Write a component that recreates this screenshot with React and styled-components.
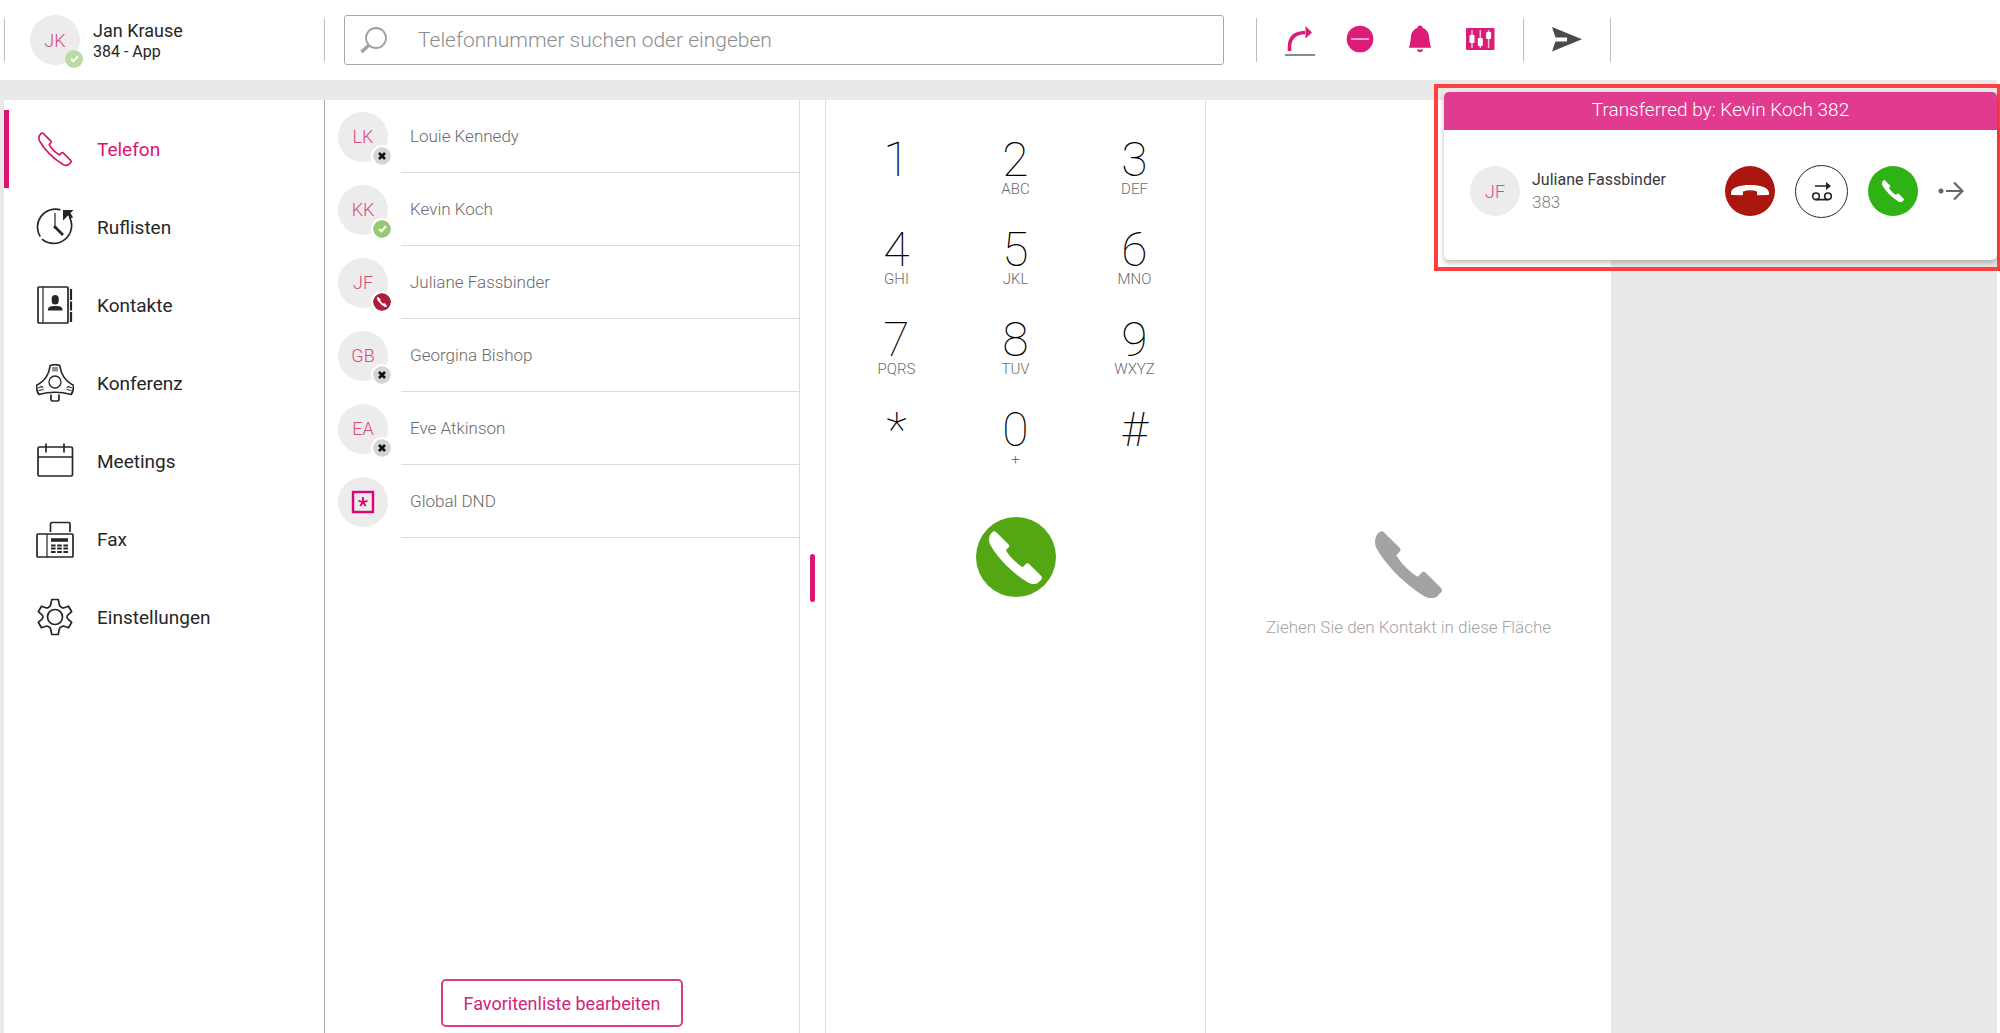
import React from 'react';
import styled, { createGlobalStyle } from 'styled-components';

const magenta = '#dc1472';

const GlobalStyle = createGlobalStyle`
  *, *::before, *::after { box-sizing: border-box; }
  html, body, #root { height: 100%; }
  body {
    margin: 0;
    background: #fff;
    color: #262626;
    font-family: Roboto, "Liberation Sans", sans-serif;
    font-size: 18px;
    overflow: hidden;
  }
  button, input { font: inherit; color: inherit; }
  button { background: none; border: 0; padding: 0; cursor: pointer; }
  svg { display: block; }
`;

const Page = styled.div`
  min-height: 100%;
  display: flex;
  flex-direction: column;
`;

const Header = styled.header`
  height: 80px;
  max-width: 1611px;
  width: 100%;
  padding-left: 4px;
  display: flex;
  align-items: center;
`;

const Profile = styled.div`
  width: 320px;
  height: 44px;
  border-left: 1px solid #bdbdbd;
  padding-left: 25px;
  display: flex;
  align-items: center;
  gap: 13px;
`;

const ProfileName = styled.div`
  padding-top: 2px;
  line-height: 21px;
  font-size: 18px;
`;

const ProfileLine = styled.div`
  line-height: 21px;
  font-size: 16px;
`;

const SearchWrap = styled.div`
  flex: 1;
  height: 44px;
  padding: 0 32px 0 19px;
  border-left: 1px solid #bdbdbd;
  display: flex;
  align-items: center;
`;

const SearchBox = styled.label`
  flex: 1;
  height: 50px;
  padding-left: 15px;
  border: 1px solid #a8a8a8;
  border-radius: 3px;
  display: flex;
  align-items: center;
  gap: 31px;
`;

const SearchInput = styled.input`
  flex: 1;
  border: 0;
  outline: 0;
  padding: 0;
  background: none;
  font-size: 21px;
  font-weight: 300;
  &::placeholder { color: #8c8c8c; opacity: 1; }
`;

const Tools = styled.div`
  width: ${(p) => p.$width}px;
  height: 44px;
  border-left: 1px solid #bdbdbd;
  display: flex;
  align-items: center;
  justify-content: center;
  gap: 30px;
`;

const ToolsEnd = styled.div`
  width: 1px;
  height: 44px;
  background: #bdbdbd;
`;

const ToolButton = styled.button`
  width: 30px;
  height: 34px;
`;

const Stage = styled.div`
  flex: 1;
  display: flex;
  margin-right: 3px;
  padding: 20px 0 0 4px;
  background: #e9e9e9;
`;

const Main = styled.main`
  flex: 1;
  max-width: 1607px;
  display: flex;
  background: #fff;
`;

const Sidebar = styled.nav`
  width: 321px;
  padding-top: 10px;
  border-right: 1px solid #a8a8a8;
`;

const NavLink = styled.a`
  height: 78px;
  padding-left: 27px;
  border-left: 5px solid ${(p) => (p.$active ? magenta : 'transparent')};
  display: flex;
  align-items: center;
  gap: 23px;
  font-size: 19px;
  color: ${(p) => (p.$active ? magenta : '#262626')};
  text-decoration: none;
`;

const Favorites = styled.section`
  width: 475px;
  padding-bottom: 6px;
  border-right: 1px solid #dcdcdc;
  display: flex;
  flex-direction: column;
  align-items: center;
  justify-content: space-between;
`;

const ContactList = styled.ul`
  width: 100%;
  margin: 0;
  padding: 0 0 0 13px;
  list-style: none;
`;

const ContactRow = styled.li`
  height: 73px;
  display: flex;
  align-items: center;
  gap: 13px;
`;

const ContactName = styled.span`
  flex: 1;
  height: 73px;
  padding-left: 9px;
  border-bottom: 1px solid #dcdcdc;
  font-weight: 300;
  font-size: 17px;
  line-height: 73px;
  color: #6b6b6b;
`;

const Avatar = styled.div`
  position: relative;
  width: 50px;
  height: 50px;
  flex: none;
  border-radius: 50%;
  background: #ececec;
  display: flex;
  align-items: center;
  justify-content: center;
  font-weight: 300;
  font-size: 18px;
  color: #d9487f;
`;

const badgeColors = { offline: '#d3d5d8', online: '#95c973', busy: '#ab1e3f', self: '#b9dca4' };

const Badge = styled.span`
  position: absolute;
  right: -5px;
  bottom: -5px;
  width: 22px;
  height: 22px;
  border: 2px solid ${(p) => (p.$kind === 'self' ? 'transparent' : '#fff')};
  border-radius: 50%;
  background: ${(p) => badgeColors[p.$kind]};
  background-clip: padding-box;
  color: #fff;
  display: flex;
  align-items: center;
  justify-content: center;
`;

const OutlineButton = styled.button`
  width: 242px;
  height: 48px;
  border: 2px solid #de3d86;
  border-radius: 5px;
  color: #d6217b;
`;

const Splitter = styled.div`
  width: 26px;
  padding-top: 22px;
  border-right: 1px solid #dcdcdc;
  display: flex;
  align-items: center;
  justify-content: center;
`;

const Grip = styled.div`
  width: 5px;
  height: 48px;
  border-radius: 3px;
  background: ${magenta};
`;

const Dialer = styled.section`
  width: 380px;
  padding: 40px 11px 0 11px;
  border-right: 1px solid #dcdcdc;
  display: flex;
  flex-direction: column;
  align-items: center;
  gap: 32px;
`;

const Keypad = styled.div`
  width: 100%;
  display: grid;
  grid-template-columns: repeat(3, 1fr);
  row-gap: 15px;
`;

const Key = styled.button`
  height: 75px;
  display: flex;
  flex-direction: column;
  align-items: center;
`;

const Digit = styled.span`
  font-size: 48px;
  line-height: 40px;
  font-weight: 100;
  color: #000;
`;

const Letters = styled.span`
  font-size: 15px;
  line-height: 18px;
  font-weight: 300;
  color: #6b6b6b;
`;

const CallButton = styled.button`
  width: 80px;
  height: 80px;
  border-radius: 50%;
  background: #52a713;
  color: #fff;
  display: flex;
  align-items: center;
  justify-content: center;
`;

const DropZone = styled.section`
  flex: 1;
  padding-top: 36px;
  display: flex;
  flex-direction: column;
  align-items: center;
  justify-content: center;
  gap: 18px;
  color: #a3a3a3;
`;

const DropText = styled.p`
  margin: 0;
  font-size: 17px;
  line-height: 22px;
  font-weight: 300;
`;

const Highlight = styled.div`
  position: absolute;
  top: 84px;
  right: 0;
  width: 566px;
  padding: 4px 0 7px 6px;
  border: 4px solid #ff4040;
  border-right-width: 3px;
`;

const Toast = styled.aside`
  border-radius: 5px;
  background: #fff;
  box-shadow: 0 3px 5px rgba(0, 0, 0, 0.25);
  overflow: hidden;
`;

const ToastTitle = styled.h2`
  margin: 0;
  height: 38px;
  background: #e13b8f;
  color: #fff;
  font-size: 19px;
  font-weight: 300;
  line-height: 36px;
  text-align: center;
`;

const ToastBody = styled.div`
  height: 130px;
  padding: 0 33px 8px 26px;
  display: flex;
  align-items: center;
`;

const Caller = styled.div`
  flex: 1;
  padding-left: 12px;
  font-size: 16px;
  line-height: 22px;
  color: #3a3a3a;
`;

const CallerNumber = styled.div`
  font-size: 17px;
  font-weight: 300;
  color: #808080;
`;

const Actions = styled.div`
  display: flex;
  align-items: center;
  gap: 20px;
`;

const RoundButton = styled.button`
  width: ${(p) => (p.$outlined ? 53 : 50)}px;
  height: ${(p) => (p.$outlined ? 53 : 50)}px;
  border-radius: 50%;
  border: ${(p) => (p.$outlined ? '1px solid #262626' : '0')};
  background: ${(p) => p.$color};
  color: #fff;
  display: flex;
  align-items: center;
  justify-content: center;
`;

const handset =
  'M3.2 2.2 C4.8 .4 7 -.5 8.6 1 L24.4 16.6 C26 18.2 25.8 19.6 24.6 20.8 L21.4 24.2 C25 31 33.5 40 42.6 45.8 L46.6 41.8 C48 40.4 49.4 40.4 50.8 41.8 L66 57 C67.4 58.4 67.2 60.2 66 61.6 L62 65.4 C59 68 54 67.6 50 65.4 C30 54 10 33 1.4 17 C-.8 12.4 -.4 5.8 3.2 2.2 Z';

const Handset = ({ size }) => (
  <svg width={size} height={size} viewBox="0 0 67 67" fill="currentColor"><path d={handset} /></svg>
);

const BadgeIcon = ({ kind }) => {
  if (kind === 'offline')
    return <svg width="8" height="8" viewBox="0 0 8 8" stroke="#111" strokeWidth="2.6"><path d="M1 1l6 6M7 1l-6 6" /></svg>;
  if (kind === 'busy') return <Handset size={10} />;
  return <svg width="9" height="8" viewBox="0 0 9 8" fill="none" stroke="#fff" strokeWidth="2.2"><path d="M1 4l2.4 2.2L8 1.2" /></svg>;
};

const Person = ({ initials, kind, children }) => (
  <Avatar>
    {initials}
    {children}
    {kind && <Badge $kind={kind}><BadgeIcon kind={kind} /></Badge>}
  </Avatar>
);

const NavSvg = ({ children }) => (
  <svg width="38" height="38" viewBox="0 0 38 38" fill="none" stroke="currentColor" strokeWidth="1.7" strokeLinejoin="round">
    {children}
  </svg>
);

const icons = {
  phone: <NavSvg><path transform="translate(3 3) scale(.48)" strokeWidth="3.6" d={handset} /></NavSvg>,
  calls: (
    <NavSvg>
      <path d="M24.6 1.8A18 18 0 0 0 4.2 28.6M6 31.2A18 18 0 0 0 33.4 8.8" />
      <path d="M19 5v14" strokeWidth="1.2" />
      <path d="M19 19l8 8" strokeWidth="2.6" />
      <circle cx="19" cy="19" r="1.6" fill="currentColor" stroke="none" />
      <path d="M27 2H37.6L34.5 5L37 9.5L34.5 10.5L32 7.5L27 12.5Z" fill="currentColor" stroke="none" />
    </NavSvg>
  ),
  contacts: (
    <NavSvg>
      <rect x="2" y="1" width="30" height="36" rx="1" />
      <path d="M7 1v36" strokeWidth="1.2" />
      <path d="M35 3v11M35 15.5v9M35 26v10" strokeWidth="2.2" />
      <rect x="15.7" y="9" width="7" height="9.5" rx="3.5" fill="currentColor" stroke="none" />
      <path d="M11.8 24.5c0-4 3-4.500 7.400-4.500s7.400.5 7.400 4.500z" fill="currentColor" stroke="none" />
    </NavSvg>
  ),
  conference: (
    <NavSvg>
      <path d="M14.2 1.5Q19 0 23.8 1.5C25 10 28 16 37.7 21.5Q37.5 27 35.2 30.5Q19 26 2.8 30.5Q.5 27 .3 21.5C10 16 13 10 14.2 1.5Z" />
      <circle cx="19" cy="18" r="6" strokeWidth="1.3" />
      <path d="M17 3v4.500M19 3v4.500M21 3v4.500M1.500 24l5-1.500M2.500 26.500l5-1M4.500 22l3 2M36.500 24l-5-1.500M35.500 26.500l-5-1M33.500 22l-3 2" strokeWidth="1" />
      <path d="M15 30.500v5q0 1.500 1.500 1.500h5q1.500 0 1.500-1.500v-5" />
    </NavSvg>
  ),
  meetings: (
    <NavSvg>
      <rect x="2" y="5" width="34.5" height="29" rx="1.5" />
      <path d="M2 15h34.500M10 1.500v9M28 1.500v9" />
    </NavSvg>
  ),
  fax: (
    <NavSvg>
      <rect x="1" y="14" width="36" height="23" rx="1" />
      <path d="M11 14v23" strokeWidth="1.2" />
      <path d="M14.500 12V4q0-1.500 1.500-1.500h16.500q1.500 0 1.500 1.500v8" />
      <path d="M15 20h17" strokeWidth="3.6" />
      <path d="M15 25.500h17M15 28.500h17M15 32h17" strokeWidth="1.8" strokeDasharray="4.6 1.6" />
    </NavSvg>
  ),
  settings: (
    <NavSvg>
      <path d="M15.8 1.500h6.400l1.200 5.500q.3 1.300 1.600 2l.8.5q1.200.7 2.400.3l4.300-1.600l3.200 5.500l-3.400 3q-1.300 1-1.300 2.300t1.300 2.300l3.400 3l-3.200 5.500l-4.300-1.600q-1.200-.4-2.400.3l-.8.500q-1.300.7-1.600 2l-1.200 5.500h-6.400l-1.200-5.500q-.3-1.300-1.600-2l-.8-.5q-1.200-.7-2.400-.3l-4.300 1.600l-3.200-5.500l3.400-3q1.300-1 1.300-2.300t-1.300-2.300l-3.400-3l3.200-5.500l4.300 1.600q1.200.4 2.400-.3l.8-.5q1.300-.7 1.600-2z" />
      <circle cx="19" cy="19" r="7.5" />
    </NavSvg>
  ),
};

const nav = [
  ['Telefon', 'phone'], ['Ruflisten', 'calls'], ['Kontakte', 'contacts'], ['Konferenz', 'conference'],
  ['Meetings', 'meetings'], ['Fax', 'fax'], ['Einstellungen', 'settings'],
];

const contacts = [
  ['LK', 'Louie Kennedy', 'offline'], ['KK', 'Kevin Koch', 'online'], ['JF', 'Juliane Fassbinder', 'busy'],
  ['GB', 'Georgina Bishop', 'offline'], ['EA', 'Eve Atkinson', 'offline'],
];

const keys = [
  ['1', ''], ['2', 'ABC'], ['3', 'DEF'], ['4', 'GHI'], ['5', 'JKL'], ['6', 'MNO'],
  ['7', 'PQRS'], ['8', 'TUV'], ['9', 'WXYZ'], ['*', ''], ['0', '+'], ['#', ''],
];

const tools = [
  ['Rufumleitung', (
    <svg width="30" height="34" viewBox="0 0 30 34" fill="none">
      <path d="M4.500 28V24Q4.500 10 20 9.500" stroke="#dc1c77" strokeWidth="3.6" />
      <path d="M20.500 3l6.500 6.500l-6.500 6z" fill="#dc1c77" />
      <path d="M0 32h30" stroke="#8a8a8a" strokeWidth="2" />
    </svg>
  )],
  ['Nicht stören', (
    <svg width="30" height="34" viewBox="0 0 30 34">
      <circle cx="15" cy="16" r="13.3" fill="#dc1c77" /><path d="M6 16h18" stroke="#f3a6cb" strokeWidth="2" />
    </svg>
  )],
  ['Klingelton', (
    <svg width="30" height="34" viewBox="0 0 30 34" fill="#dc1c77">
      <path d="M15 2.500c1.600 0 2.600 1 2.800 2.400 4.200 1.500 6 5 6.400 9.600.4 4.600.8 7.500 2 10.300H3.800c1.200-2.800 1.600-5.700 2-10.300.4-4.600 2.200-8.100 6.400-9.600.2-1.400 1.200-2.400 2.800-2.400zM12 26.500h6c-.3 1.800-1.400 2.600-3 2.600s-2.700-.8-3-2.600z" />
    </svg>
  )],
  ['Audioeinstellungen', (
    <svg width="30" height="34" viewBox="0 0 30 34">
      <rect x="1" y="5" width="28.5" height="22" rx="1" fill="#dc1c77" />
      <path d="M7 7v18M15.300 7v18M23.600 7v18" stroke="#f6bcd8" strokeWidth="1.5" />
      <rect x="4.5" y="12" width="5" height="8" rx="1" fill="#fff" />
      <rect x="12.8" y="15" width="5" height="8" rx="1" fill="#fff" />
      <rect x="21.1" y="9" width="5" height="7" rx="1" fill="#fff" />
    </svg>
  )],
];

export default function App() {
  return (
    <Page>
      <GlobalStyle />
      <Header>
        <Profile>
          <Person initials="JK" kind="self" />
          <div>
            <ProfileName>Jan Krause</ProfileName>
            <ProfileLine>384 - App</ProfileLine>
          </div>
        </Profile>
        <SearchWrap>
          <SearchBox>
            <svg width="27" height="27" viewBox="0 0 27 27" fill="none" stroke="#a0a0a0">
              <circle cx="16" cy="11" r="10" strokeWidth="1.8" />
              <path d="M8.500 18.500L1.500 25" strokeWidth="3.4" />
            </svg>
            <SearchInput aria-label="Suche" placeholder="Telefonnummer suchen oder eingeben" />
          </SearchBox>
        </SearchWrap>
        <Tools $width={267}>
          {tools.map(([label, icon]) => <ToolButton key={label} aria-label={label}>{icon}</ToolButton>)}
        </Tools>
        <Tools $width={87}>
          <ToolButton aria-label="Senden">
            <svg width="30" height="34" viewBox="0 0 30 34" fill="#4a4a4a">
              <path d="M0 4L30 16.300L0 28.500L3.500 18.500H15V14.500H3.500Z" />
            </svg>
          </ToolButton>
        </Tools>
        <ToolsEnd />
      </Header>
      <Stage>
        <Main>
          <Sidebar>
            {nav.map(([label, icon], i) => (
              <NavLink key={label} href={`#${icon}`} $active={i === 0}>{icons[icon]}{label}</NavLink>
            ))}
          </Sidebar>
          <Favorites>
            <ContactList>
              {contacts.map(([initials, name, kind]) => (
                <ContactRow key={name}>
                  <Person initials={initials} kind={kind} />
                  <ContactName>{name}</ContactName>
                </ContactRow>
              ))}
              <ContactRow>
                <Person>
                  <svg width="24" height="24" viewBox="0 0 24 24" fill="none" stroke="#e20074">
                    <rect x="2" y="2" width="20" height="20" strokeWidth="2.4" />
                    <path d="M12 7v5.200M12 12.200L7.500 10.800M12 12.200L16.500 10.800M12 12.200L9.200 16M12 12.200L14.800 16" strokeWidth="1.8" />
                  </svg>
                </Person>
                <ContactName>Global DND</ContactName>
              </ContactRow>
            </ContactList>
            <OutlineButton>Favoritenliste bearbeiten</OutlineButton>
          </Favorites>
          <Splitter><Grip /></Splitter>
          <Dialer>
            <Keypad>
              {keys.map(([digit, letters]) => (
                <Key key={digit}>
                  <Digit>{digit}</Digit>
                  {letters && <Letters>{letters}</Letters>}
                </Key>
              ))}
            </Keypad>
            <CallButton aria-label="Anrufen"><Handset size={53} /></CallButton>
          </Dialer>
          <DropZone>
            <Handset size={67} />
            <DropText>Ziehen Sie den Kontakt in diese Fläche</DropText>
          </DropZone>
        </Main>
      </Stage>
      <Highlight>
        <Toast>
          <ToastTitle>Transferred by: Kevin Koch 382</ToastTitle>
          <ToastBody>
            <Person initials="JF" />
            <Caller>
              Juliane Fassbinder
              <CallerNumber>383</CallerNumber>
            </Caller>
            <Actions>
              <RoundButton $color="#ab160f" aria-label="Ablehnen">
                <svg width="38" height="12" viewBox="0 0 38 12" fill="#fff">
                  <path d="M0 7.500C1 2 9 0 19 0s18 2 19 7.500c.2 2 0 2.500-1.500 2.500l-9 .3c-1 0-1.500-.5-1.500-1.500V6.500Q19 4 12 6.500v2.300c0 1-.5 1.500-1.500 1.500l-9-.3C0 10-.2 9.500 0 7.500z" />
                </svg>
              </RoundButton>
              <RoundButton $outlined $color="#fff" aria-label="Voicemail">
                <svg width="22" height="20" viewBox="0 0 22 20" fill="none" stroke="#222" strokeWidth="1.6">
                  <path d="M4 5h13" /><path d="M15 1l5 4l-5 4z" fill="#222" stroke="none" />
                  <circle cx="5" cy="15.3" r="3.3" /><circle cx="17" cy="15.3" r="3.3" /><path d="M5 18.600h12" />
                </svg>
              </RoundButton>
              <RoundButton $color="#2fb214" aria-label="Annehmen"><Handset size={22} /></RoundButton>
              <button aria-label="Weiter">
                <svg width="26" height="20" viewBox="0 0 26 20" fill="none" stroke="#666" strokeWidth="2.2">
                  <circle cx="3" cy="10" r="2.5" fill="#666" stroke="none" />
                  <path d="M8 10h16M16 1.500l8.500 8.500l-8.500 8.500" />
                </svg>
              </button>
            </Actions>
          </ToastBody>
        </Toast>
      </Highlight>
    </Page>
  );
}
